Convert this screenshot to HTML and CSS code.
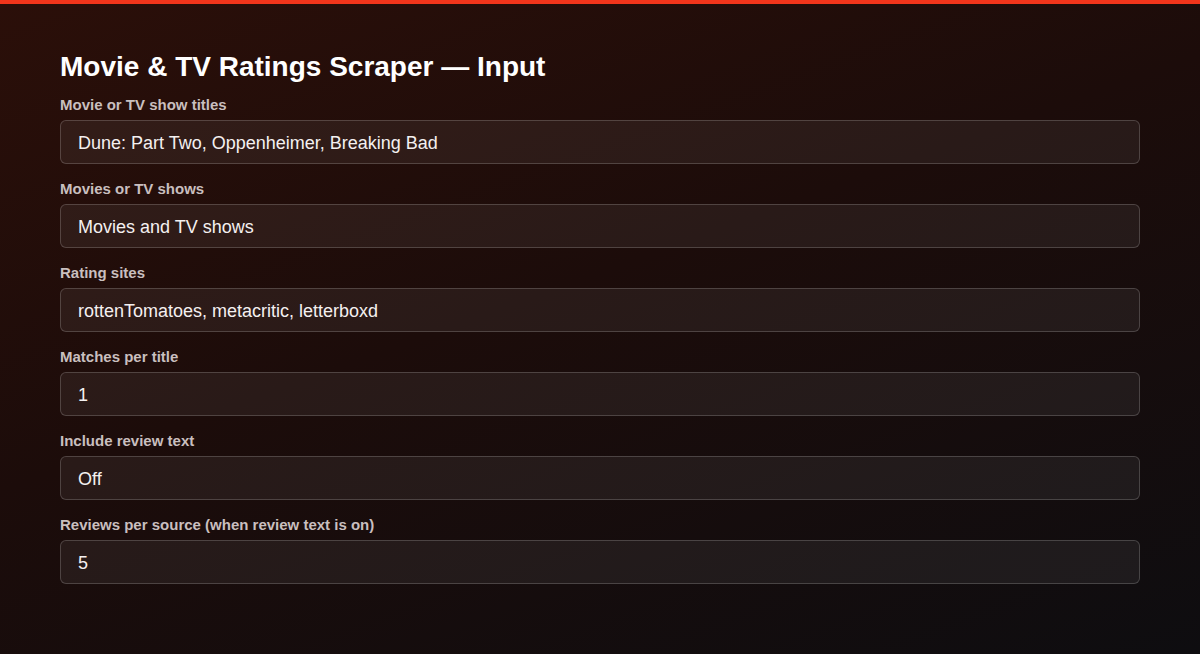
FILE: index.html
```html
<!DOCTYPE html>
<html>
<head>
    <meta charset="UTF-8" />
    <title>Movie &amp; TV Ratings Scraper</title>
    <link rel="stylesheet" href="styles.css">
</head>
<body>
    <div class="top-bar"></div>
    <div class="page">
        <h1>Movie &amp; TV Ratings Scraper — Input</h1>

        <div class="field">
            <label>Movie or TV show titles</label>
            <div class="input">Dune: Part Two, Oppenheimer, Breaking Bad</div>
        </div>
        <div class="field">
            <label>Movies or TV shows</label>
            <div class="input">Movies and TV shows</div>
        </div>
        <div class="field">
            <label>Rating sites</label>
            <div class="input">rottenTomatoes, metacritic, letterboxd</div>
        </div>
        <div class="field">
            <label>Matches per title</label>
            <div class="input">1</div>
        </div>
        <div class="field">
            <label>Include review text</label>
            <div class="input">Off</div>
        </div>
        <div class="field">
            <label>Reviews per source (when review text is on)</label>
            <div class="input">5</div>
        </div>
    </div>
</body>
</html>
```

FILE: styles.css
```css
* {
    margin: 0;
    padding: 0;
    box-sizing: border-box;
}
html, body {
    height: 100%;
}
body {
    font-family: "Liberation Sans", Arial, sans-serif;
    color: #f2eeee;
    background: linear-gradient(160deg, #2b0f09 0%, #1c0c0a 45%, #0e0d10 100%);
    overflow: hidden;
}
.top-bar {
    height: 4px;
    background-color: #f2351b;
}
.page {
    padding: 46px 60px 0;
}
h1 {
    font-size: 28px;
    line-height: 34px;
    font-weight: bold;
    color: #ffffff;
    margin-bottom: 13px;
}
.field {
    margin-bottom: 17px;
}
.field label {
    display: block;
    font-size: 15px;
    line-height: 16px;
    font-weight: bold;
    color: #c9bfbf;
    margin-bottom: 7px;
}
.input {
    height: 44px;
    padding: 2px 17px 0;
    display: flex;
    align-items: center;
    font-size: 18px;
    color: #f4f0f0;
    background-color: rgba(255, 255, 255, 0.06);
    border: 1px solid rgba(255, 255, 255, 0.18);
    border-radius: 6px;
}
```
